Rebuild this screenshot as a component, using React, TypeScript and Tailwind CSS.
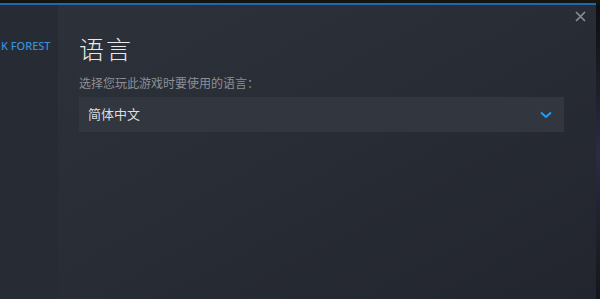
import React from "react";

export default function App() {
  return (
    <div className="w-[600px] h-[299px] overflow-hidden bg-[#101317] flex flex-col" style={{ fontFamily: '"Noto Sans", "Noto Sans CJK SC", sans-serif' }}>
      <div className="h-[3px] bg-[#12160f]" />
      <div className="h-[2px] bg-[#1f66b8] mr-[4px]" />
      <div className="flex flex-1">
        <div className="w-[58px] bg-[#272b33] pt-[34px] overflow-hidden">
          <div className="whitespace-nowrap text-[11px] font-medium text-[#3a8fd9] leading-[14px] ml-[1px]">K FOREST</div>
        </div>
        <div className="relative flex-1 bg-gradient-to-br from-[#2d3139] via-[#282c35] to-[#22252d] pl-[21px] pr-[32px] pt-[27px]">
          <button className="absolute right-[10px] top-[5px] w-[12px] h-[12px] flex items-center justify-center text-[#8a9097]">
            <svg width="11" height="11" viewBox="0 0 11 11" fill="none" stroke="currentColor" strokeWidth="1.6">
              <path d="M1 1 L10 10 M10 1 L1 10" />
            </svg>
          </button>
          <div className="text-[25px] leading-[34px] text-[#e8e9ea] font-light tracking-[2px]">语言</div>
          <div className="mt-[9px] text-[12px] leading-[18px] text-[#8b9096]">选择您玩此游戏时要使用的语言：</div>
          <div className="mt-[4px] h-[35px] bg-[#32363f] flex items-center justify-between pl-[9px] pr-[12px]">
            <span className="text-[13px] text-[#dcdedf]">简体中文</span>
            <svg width="12" height="8" viewBox="0 0 12 8" fill="none" stroke="#1a9fff" strokeWidth="2">
              <path d="M1 1.5 L6 6 L11 1.5" />
            </svg>
          </div>
        </div>
        <div className="w-[4px] bg-gradient-to-b from-[#0d0f12] via-[#2e2a40] to-[#15161c]" />
      </div>
    </div>
  );
}
